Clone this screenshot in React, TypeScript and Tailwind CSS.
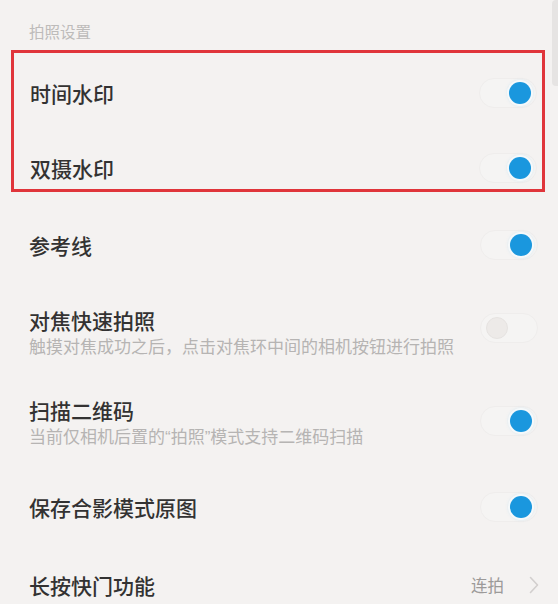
import React from "react";

const font = { fontFamily: '"Noto Sans CJK SC", "Noto Sans", sans-serif' };

function Toggle({ on }: { on: boolean }) {
  return (
    <div className="relative w-[58px] h-[30px] shrink-0 rounded-full border border-[#efedec] bg-[#f5f4f3]">
      {on ? (
        <div className="absolute right-[5px] top-[3px] w-[22px] h-[22px] rounded-full bg-[#1a97de] shadow-[0_0_0_2px_rgba(255,255,255,0.7),0_0_4px_rgba(26,151,222,0.35)]" />
      ) : (
        <div className="absolute left-[5px] top-[3px] w-[22px] h-[22px] rounded-full bg-[#edeae8] border border-[#e6e3e1]" />
      )}
    </div>
  );
}

function Title({ children }: { children: React.ReactNode }) {
  return <div className="text-[21px] leading-[26px] font-medium text-[#333232]">{children}</div>;
}

function Sub({ children }: { children: React.ReactNode }) {
  return <div className="text-[17px] leading-[26px] text-[#b6b4b3] whitespace-nowrap">{children}</div>;
}

const q = { fontFamily: '"Liberation Sans", sans-serif' };

export default function App() {
  return (
    <div className="relative w-[558px] h-[604px] overflow-hidden bg-[#f4f2f1]" style={font}>
      <div className="absolute right-0 top-0 w-[6px] h-[86px] bg-[#e6e4e3] rounded-l" />

      <div className="h-[50px] pl-[29px] pt-[21px] text-[15.5px] leading-[20px] text-[#bdbbba]">拍照设置</div>

      <div className="ml-[11px] w-[534px] h-[142px] border-[3px] border-[#e0353b]">
        <div className="h-[79px] flex items-center justify-between pl-[16px] pr-[5px]">
          <Title>时间水印</Title>
          <Toggle on />
        </div>
        <div className="h-[57px] pt-[14px] flex items-center justify-between pl-[16px] pr-[5px]">
          <Title>双摄水印</Title>
          <Toggle on />
        </div>
      </div>

      <div className="mt-[15px] h-[76px] flex items-center justify-between pl-[29px] pr-[20px]">
        <Title>参考线</Title>
        <Toggle on />
      </div>

      <div className="h-[100px] flex items-center justify-between pl-[29px] pr-[20px]">
        <div>
          <Title>对焦快速拍照</Title>
          <Sub>触摸对焦成功之后，点击对焦环中间的相机按钮进行拍照</Sub>
        </div>
        <div className="-mt-[10px]">
          <Toggle on={false} />
        </div>
      </div>

      <div className="h-[86px] pb-[4px] flex items-center justify-between pl-[29px] pr-[20px]">
        <div>
          <Title>扫描二维码</Title>
          <Sub>
            当前仅相机后置的<span style={q}>“</span>拍照<span style={q}>”</span>模式支持二维码扫描
          </Sub>
        </div>
        <div className="-mt-[6px]">
          <Toggle on />
        </div>
      </div>

      <div className="h-[76px] flex items-center justify-between pl-[29px] pr-[20px]">
        <Title>保存合影模式原图</Title>
        <Toggle on />
      </div>

      <div className="h-[80px] flex items-center justify-between pl-[29px] pr-[19px]">
        <Title>长按快门功能</Title>
        <div className="flex items-center gap-[25px]">
          <span className="text-[16.5px] leading-[22px] text-[#9c9a99]">连拍</span>
          <svg width="10" height="18" viewBox="0 0 10 18" fill="none">
            <path d="M1.5 1.5 L8.5 9 L1.5 16.5" stroke="#d2cfce" strokeWidth="1.6" strokeLinecap="round" strokeLinejoin="round" />
          </svg>
        </div>
      </div>
    </div>
  );
}
